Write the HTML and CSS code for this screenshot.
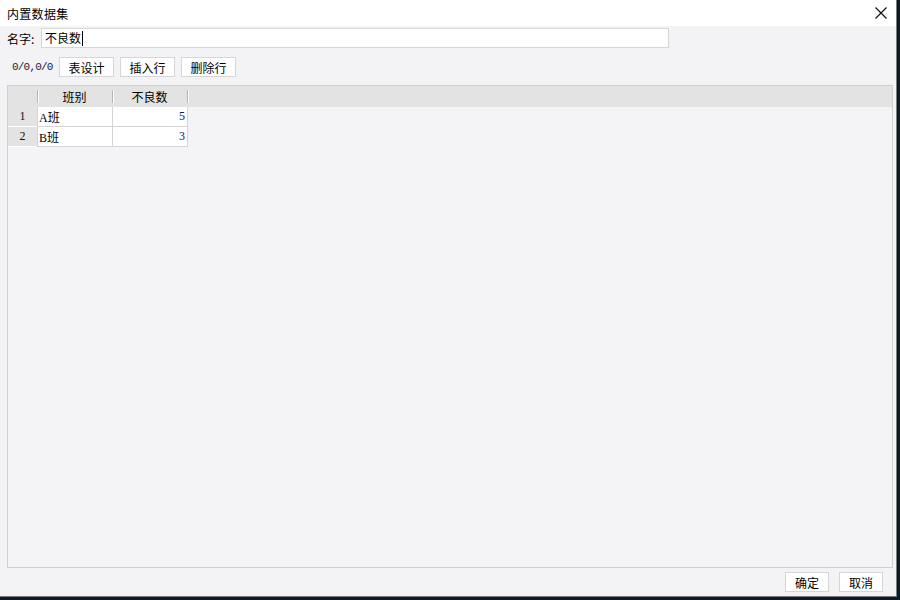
FILE: index.html
```html
<!DOCTYPE html>
<html>
<head>
<meta charset="utf-8">
<link rel="stylesheet" href="styles.css">
</head>
<body>
<div class="desk">
  <div class="window">
    <div class="titlebar">
      <span class="title">内置数据集</span>
      <svg class="close" width="12" height="12" viewBox="0 0 12 12"><path d="M0.5 0.5 L11.5 11.5 M11.5 0.5 L0.5 11.5" stroke="#111" stroke-width="1.2" fill="none"/></svg>
    </div>
    <div class="body">
      <div class="name-row">
        <span class="label">名字:</span>
        <div class="input">不良数<span class="caret"></span></div>
      </div>
      <div class="toolbar">
        <span class="pos">0/0,0/0</span>
        <button class="btn">表设计</button>
        <button class="btn">插入行</button>
        <button class="btn">删除行</button>
      </div>
      <div class="grid">
        <div class="thead">
          <div class="hcell rn"></div>
          <div class="hcell c1">班别</div>
          <div class="hcell c2">不良数</div>
        </div>
        <div class="trow">
          <div class="cell rn">1</div>
          <div class="cell c1 txt">A班</div>
          <div class="cell c2 num">5</div>
        </div>
        <div class="trow">
          <div class="cell rn">2</div>
          <div class="cell c1 txt">B班</div>
          <div class="cell c2 num">3</div>
        </div>
      </div>
      <div class="footer">
        <button class="btn fbtn">确定</button>
        <button class="btn fbtn">取消</button>
      </div>
    </div>
  </div>
</div>
</body>
</html>
```
FILE: styles.css
```css
html, body {
  margin: 0;
  padding: 0;
  width: 900px;
  height: 600px;
  overflow: hidden;
  background: #0c1a28;
  font-family: "Microsoft YaHei", "Noto Sans CJK SC", sans-serif;
}
.desk {
  width: 900px;
  height: 600px;
  display: flex;
  align-items: flex-start;
}
.window {
  width: 896px;
  height: 596px;
  border-right: 1px solid #7a7a7a;
  border-bottom: 1px solid #7a7a7a;
  background: #f3f3f5;
  display: flex;
  flex-direction: column;
}
.titlebar {
  height: 26px;
  background: #ffffff;
  display: flex;
  align-items: center;
  justify-content: space-between;
  padding: 0 9px 0 7px;
  flex: none;
}
.title {
  font-size: 12px;
  color: #000;
  letter-spacing: 0.3px;
}
.close {
  display: block;
}
.body {
  flex: 1;
  display: flex;
  flex-direction: column;
  padding: 0 3px 0 7px;
}
.name-row {
  display: flex;
  align-items: center;
  height: 20px;
  margin-top: 2px;
}
.label {
  font-size: 12px;
  width: 34px;
  color: #000;
}
.input {
  width: 623px;
  height: 18px;
  background: #fff;
  border: 1px solid #d6d6d6;
  font-size: 12px;
  line-height: 18px;
  padding-left: 3px;
  display: flex;
  align-items: center;
}
.caret {
  display: inline-block;
  width: 1px;
  height: 15px;
  background: #000;
  margin-left: 1px;
}
.toolbar {
  display: flex;
  align-items: center;
  height: 20px;
  margin-top: 9px;
  gap: 6px;
}
.pos {
  font-family: "Liberation Mono", "DejaVu Sans Mono", monospace;
  font-size: 11px;
  color: #1a1a40;
  margin-left: 5px;
  letter-spacing: -0.8px;
  width: 41px;
}
.btn {
  height: 20px;
  background: #fff;
  border: 1px solid #d6d6d6;
  font-family: "Microsoft YaHei", "Noto Sans CJK SC", sans-serif;
  font-size: 12px;
  padding: 0;
  width: 55px;
  color: #000;
  display: flex;
  align-items: center;
  justify-content: center;
}
.grid {
  margin-top: 8px;
  width: 884px;
  height: 481px;
  border: 1px solid #cfcfcf;
  background: #f4f4f6;
  flex: none;
}
.thead {
  display: flex;
  height: 21px;
  background: #e3e3e3;
}
.hcell {
  font-size: 12px;
  color: #000;
  display: flex;
  align-items: center;
  justify-content: center;
  position: relative;
}
.hcell::after {
  content: "";
  position: absolute;
  right: -1px;
  top: 4px;
  height: 13px;
  width: 1px;
  background: #b5b5b5;
  box-shadow: 1px 0 0 #ffffff;
}
.rn { width: 29px; flex: none; }
.c1 { width: 75px; flex: none; }
.c2 { width: 75px; flex: none; }
.trow {
  display: flex;
  height: 20px;
}
.cell {
  box-sizing: border-box;
  height: 20px;
  font-size: 12px;
  display: flex;
  align-items: center;
}
.cell.rn {
  background: #e3e3e3;
  justify-content: center;
  font-family: "Liberation Serif", serif;
  color: #111;
  border-bottom: 1px solid #ffffff;
}
.cell.c1, .cell.c2 {
  background: #fff;
  border-right: 1px solid #d4d4d4;
  border-bottom: 1px solid #d4d4d4;
}
.cell.c1 {
  width: 76px;
  border-left: 1px solid #d4d4d4;
}
.txt {
  font-family: "Liberation Serif", "Noto Sans CJK SC", serif;
  padding-left: 1px;
  color: #000;
}
.num {
  justify-content: flex-end;
  font-family: "Liberation Serif", serif;
  color: #15155e;
  padding-right: 2px;
}
.footer {
  display: flex;
  justify-content: flex-end;
  gap: 10px;
  margin-top: 4px;
  padding-right: 10px;
}
.fbtn {
  width: 44px;
}
```
